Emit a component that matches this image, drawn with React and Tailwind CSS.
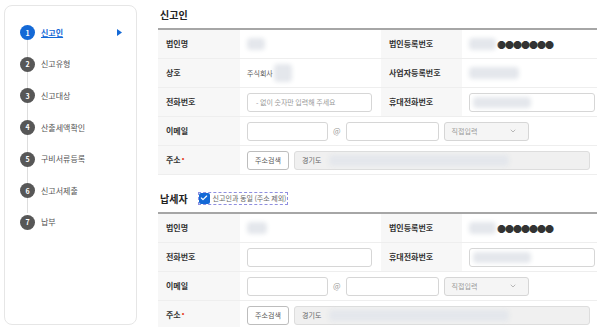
import { Check, ChevronDown } from 'lucide-react';

const steps = ['신고인', '신고유형', '신고대상', '산출세액확인', '구비서류등록', '신고서제출', '납부'];

const Blur = ({ w = 30, h = 12, className = '' }) => (
  <span className={`inline-block rounded-sm bg-[#e4e7ec] blur-[2px] ${className}`} style={{ width: w, height: h }} />
);

const Label = ({ children, req }) => (
  <div className="flex items-center bg-[#f7f7f7] pl-2 text-[8px] font-bold text-[#333]">
    {children}
    {req && <span className="ml-px -mt-1 text-[7px] text-[#e5422b]">•</span>}
  </div>
);

const Cell = ({ children, className = '' }) => (
  <div className={`flex items-center bg-white px-[7px] ${className}`}>{children}</div>
);

const Input = ({ className = '', children }) => (
  <div className={`flex h-[19px] items-center rounded-[3px] border border-[#d6d6d6] bg-white px-2 text-[7px] text-[#999] ${className}`}>
    {children}
  </div>
);

const EmailRow = () => (
  <div className="grid h-[29px] grid-cols-[82px_1fr] border-b border-[#eeeeee]">
    <Label>이메일</Label>
    <Cell className="gap-0">
      <Input className="w-[81px]" />
      <span className="mx-[5px] text-[8px] text-[#999]">@</span>
      <Input className="w-[93px]" />
      <div className="ml-[5px] flex h-[19px] w-[85px] items-center justify-between rounded-[3px] border border-[#d6d6d6] bg-[#f5f5f5] px-[7px] text-[7px] text-[#999]">
        직접입력
        <ChevronDown size={8} className="mr-1 text-[#999]" />
      </div>
    </Cell>
  </div>
);

const AddressRow = () => (
  <div className="grid h-[29px] grid-cols-[82px_1fr] border-b border-[#eeeeee]">
    <Label req>주소</Label>
    <Cell>
      <div className="flex h-[19px] w-[42px] items-center justify-center rounded-[3px] border border-[#bdbdbd] bg-white text-[7px] text-[#555]">
        주소검색
      </div>
      <div className="ml-[5px] flex h-[19px] flex-1 items-center rounded-[3px] border border-[#dddddd] bg-[#f0f0f0] px-[7px] text-[7px] text-[#666]">
        경기도
        <Blur w={180} h={11} className="ml-2 bg-[#dcdfe3]" />
      </div>
    </Cell>
  </div>
);

const Row = ({ children }) => (
  <div className="grid h-[29px] grid-cols-[82px_141px_81px_1fr] border-b border-[#eeeeee]">{children}</div>
);

const Dots = () => (
  <span className="ml-px text-[9px] leading-none tracking-[-1px] text-[#333]">●●●●●●●</span>
);

export default function App() {
  return (
    <div className="flex h-[327px] w-[602px] overflow-hidden bg-white" style={{ fontFamily: '"Noto Sans CJK KR", "Noto Sans", sans-serif' }}>
      {/* sidebar */}
      <div className="ml-1 mt-[5px] h-[320px] w-[133px] shrink-0 rounded-lg border border-[#e6e6e6] bg-white pt-[11px]">
        <div className="relative pl-[15px]">
          <div className="absolute left-[22px] top-[8px] h-[188px] w-px bg-[#dddddd]" />
          {steps.map((s, i) => (
            <div key={s} className="relative flex h-[31.6px] items-center">
              <span className={`flex h-[15px] w-[15px] items-center justify-center rounded-full text-[7px] font-bold text-white ${i === 0 ? 'bg-[#1469d6]' : 'bg-[#575757]'}`}>
                {i + 1}
              </span>
              <span className={`ml-[6px] text-[8px] ${i === 0 ? 'font-bold text-[#1469d6] underline' : 'text-[#555]'}`}>{s}</span>
              {i === 0 && (
                <svg className="absolute left-[97px] top-[12px]" width="5" height="7" viewBox="0 0 5 7">
                  <path d="M0 0L5 3.5L0 7Z" fill="#1469d6" />
                </svg>
              )}
            </div>
          ))}
        </div>
      </div>

      {/* main */}
      <div className="ml-[21px] w-[439px] shrink-0">
        <div className="flex h-[28px] items-center pl-[2px] text-[10px] font-bold text-[#222]">신고인</div>
        <div className="border-t-2 border-[#a6a6a6]">
          <Row>
            <Label>법인명</Label>
            <Cell><Blur w={18} h={12} /></Cell>
            <Label>법인등록번호</Label>
            <Cell><Blur w={27} h={12} /><Dots /></Cell>
          </Row>
          <Row>
            <Label>상호</Label>
            <Cell className="text-[7px] text-[#555]">주식회사<Blur w={18} h={18} className="ml-px" /></Cell>
            <Label>사업자등록번호</Label>
            <Cell><Blur w={50} h={12} /></Cell>
          </Row>
          <Row>
            <Label>전화번호</Label>
            <Cell><Input className="w-[125px]">- 없이 숫자만 입력해 주세요</Input></Cell>
            <Label>휴대전화번호</Label>
            <Cell><Input className="w-[126px] px-[3px]"><Blur w={58} h={11} /></Input></Cell>
          </Row>
          <EmailRow />
          <AddressRow />
        </div>

        <div className="flex h-[37px] items-center pl-[2px] pt-[9px]">
          <span className="text-[10px] font-bold text-[#222]">납세자</span>
          <div className="ml-[10px] flex items-center border border-dashed border-[#8f8fe0] pr-px">
            <span className="flex h-[11px] w-[11px] items-center justify-center rounded-[2px] bg-[#1469d6]">
              <Check size={8} strokeWidth={3.5} className="text-white" />
            </span>
            <span className="ml-[3px] text-[7px] text-[#666]">신고인과 동일 (주소 제외)</span>
          </div>
        </div>
        <div className="border-t-2 border-[#a6a6a6]">
          <Row>
            <Label>법인명</Label>
            <Cell><Blur w={20} h={12} /></Cell>
            <Label>법인등록번호</Label>
            <Cell><Blur w={27} h={12} /><Dots /></Cell>
          </Row>
          <Row>
            <Label>전화번호</Label>
            <Cell><Input className="w-[125px]" /></Cell>
            <Label>휴대전화번호</Label>
            <Cell><Input className="w-[126px] px-[3px]"><Blur w={58} h={11} /></Input></Cell>
          </Row>
          <EmailRow />
          <AddressRow />
        </div>
      </div>
    </div>
  );
}
